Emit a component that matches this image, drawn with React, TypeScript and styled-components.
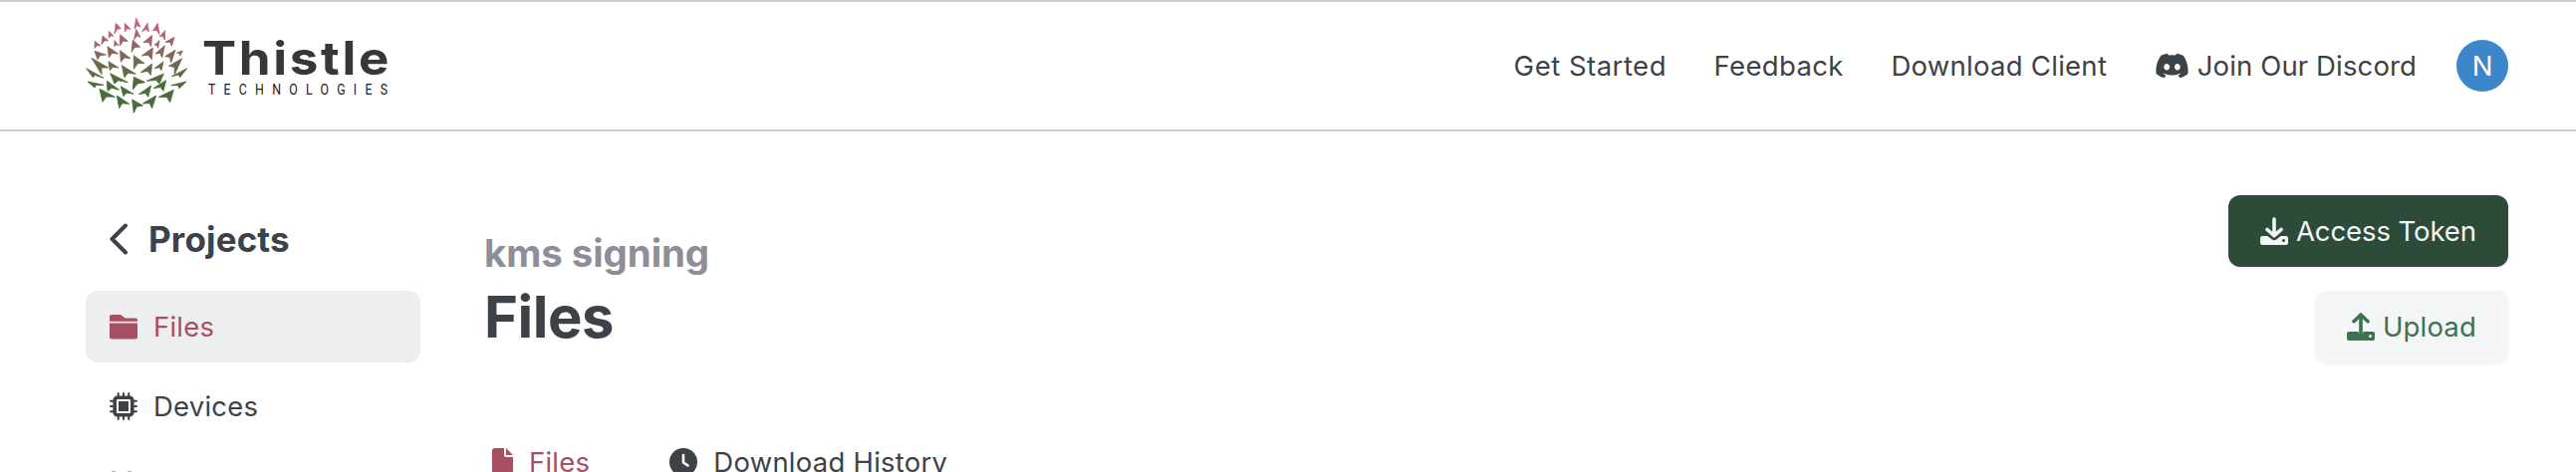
import React from "react";
import styled, { createGlobalStyle } from "styled-components";
import { FaDiscord } from "react-icons/fa6";

const Global = createGlobalStyle`
  *, *::before, *::after { box-sizing: border-box; }
  body { margin: 0; background: #fff; color: #3d4248; font-family: Inter, "Liberation Sans", sans-serif; }
`;

const Page = styled.div`
  height: 474px;
  overflow: hidden;
  background: #fff;
`;

const Header = styled.header`
  display: flex;
  align-items: center;
  justify-content: space-between;
  height: 132px;
  padding: 0 68px 0 84px;
  border-top: 2px solid #cccccc;
  border-bottom: 2px solid #ccd1d5;
`;

const Nav = styled.nav`
  display: flex;
  align-items: center;
`;

const NavLink = styled.a<{ $gap?: number; $spacing?: number }>`
  display: flex;
  align-items: center;
  gap: 8px;
  margin-right: ${(p) => p.$gap ?? 47.6}px;
  font-size: 27.5px;
  line-height: 40px;
  letter-spacing: ${(p) => p.$spacing ?? 0}px;
  white-space: nowrap;
`;

const DiscordIcon = styled(FaDiscord)`
  width: 35px;
  height: 28px;
`;

const Avatar = styled.div`
  display: flex;
  align-items: center;
  justify-content: center;
  width: 52px;
  height: 52px;
  border-radius: 50%;
  background: #3c87cc;
  color: #fff;
  font-size: 27.5px;
`;

const Body = styled.div`
  display: flex;
  padding: 64px 68px 0 86px;
`;

const Sidebar = styled.aside`
  display: flex;
  flex-direction: column;
  gap: 8px;
  width: 336px;
  flex: none;
`;

const BackLink = styled.a`
  display: flex;
  align-items: center;
  gap: 21px;
  height: 88px;
  padding-left: 24px;
  font-size: 35px;
  font-weight: 700;
  letter-spacing: 0.15px;
`;

const SideItem = styled.a<{ $active?: boolean }>`
  display: flex;
  align-items: center;
  gap: 16px;
  height: 72px;
  padding-left: 24px;
  border-radius: 12px;
  background: ${(p) => (p.$active ? "#edeef0" : "transparent")};
  color: ${(p) => (p.$active ? "#a75064" : "#3d4248")};
  font-size: 27.5px;
  letter-spacing: 0.2px;
`;

const Main = styled.main`
  flex: 1;
  margin-left: 64px;
`;

const TitleRow = styled.div`
  display: flex;
  justify-content: space-between;
  height: 232px;
`;

const Titles = styled.div`
  padding-top: 34px;
`;

const ProjectName = styled.h2`
  margin: 0;
  color: #8c8f99;
  font-size: 38.5px;
  font-weight: 700;
  line-height: 48px;
  letter-spacing: -0.1px;
`;

const Title = styled.h1`
  margin: 0;
  font-size: 58px;
  font-weight: 700;
  line-height: 80px;
  letter-spacing: -0.5px;
`;

const Actions = styled.div`
  display: flex;
  flex-direction: column;
  align-items: flex-end;
  gap: 24px;
`;

const Button = styled.button<{ $primary?: boolean }>`
  display: flex;
  align-items: center;
  gap: 8px;
  height: 72px;
  padding: 0 32px;
  border: 0;
  border-radius: 12px;
  background: ${(p) => (p.$primary ? "#2c4c39" : "#f4f5f7")};
  color: ${(p) => (p.$primary ? "#f4f5f7" : "#3c734f")};
  box-shadow: 0 2px 4px rgba(0, 0, 0, 0.05);
  font: 400 27.5px Inter, sans-serif;
  letter-spacing: ${(p) => (p.$primary ? -0.08 : 0.17)}px;
`;

const Tabs = styled.div`
  display: flex;
  gap: 80px;
  padding-left: 8px;
`;

const Tab = styled.a<{ $active?: boolean }>`
  display: flex;
  align-items: center;
  gap: 16px;
  height: 72px;
  color: ${(p) => (p.$active ? "#a75064" : "#3d4248")};
  font-size: 27.5px;
  letter-spacing: 0.24px;
  white-space: nowrap;
`;

/* Thistle petals: tip followed by the two tail points. */
const petals = [
  "158,13 153,45 171,40", "158,46 152,77 171,70", "148,78 144,115 170,100",
  "97,28 93,60 112,44", "124,28 124,54 141,46", "76,52 76,73 90,67",
  "57,66 54,92 74,80", "34,82 33,103 50,96", "110,62 109,96 133,82",
  "93,80 93,98 105,95", "33,112 42,137 67,123", "72,98 76,131 104,120",
  "110,110 112,145 141,134", "192,28 176,53 196,53", "223,28 209,50 228,62",
  "245,50 229,68 244,78", "206,64 180,86 203,98", "228,80 213,94 224,103",
  "273,70 246,85 265,97", "208,102 175,126 205,137", "244,95 216,120 236,132",
  "276,109 245,128 263,147", "298,111 281,117 290,126", "296,134 257,157 274,182",
  "24,133 54,182 74,162", "8,164 28,191 60,193", "12,204 33,222 60,214",
  "75,143 79,170 105,162", "115,155 123,191 157,181", "80,179 93,210 133,206",
  "70,202 72,232 107,229", "112,218 120,248 150,241", "48,226 57,265 94,250",
  "100,246 107,284 137,271", "151,125 151,166 183,149", "151,190 148,228 185,206",
  "146,258 151,298 178,276", "206,150 172,176 202,184", "240,144 213,164 234,170",
  "241,180 190,202 228,210", "311,164 265,188 290,191", "309,204 263,215 288,224",
  "248,200 210,224 240,232", "203,216 166,242 194,250", "271,229 226,250 260,266",
  "218,246 178,270 206,284",
].map((row) => {
  const [tip, a, b] = row.split(" ").map((p) => p.split(",").map(Number));
  const notch = [0, 1].map((i) => ((a[i] + b[i]) / 2) * 0.74 + tip[i] * 0.26);
  return [tip, a, notch, b].map((p) => p.join(",")).join(" ");
});

const Logo = () => (
  <svg width="310" height="110" viewBox="0 0 310 110" aria-label="Thistle Technologies">
    <defs>
      <linearGradient id="bloom" gradientUnits="userSpaceOnUse" x1="0" y1="10" x2="0" y2="300">
        <stop offset="0" stopColor="#d4588c" />
        <stop offset="0.14" stopColor="#bb6280" />
        <stop offset="0.32" stopColor="#8b665f" />
        <stop offset="0.48" stopColor="#71694e" />
        <stop offset="0.68" stopColor="#4c6c3a" />
        <stop offset="1" stopColor="#47693a" />
      </linearGradient>
    </defs>
    <g transform="translate(0 3) scale(0.33333)" fill="url(#bloom)" stroke="url(#bloom)" strokeWidth="2.6">
      {petals.map((d) => (
        <polygon key={d} points={d} />
      ))}
    </g>
    <text transform="translate(119 63.500) scale(1.1 1)" x="0" y="0" fontFamily="Inter" fontWeight="700" fontSize="46.5" fill="#373737" textLength="170.5">Thistle</text>
    <text transform="translate(125 84) scale(0.8 1)" x="0" y="0" fontFamily="Roboto" fontSize="15.5" fill="#222" textLength="225">TECHNOLOGIES</text>
  </svg>
);

const ChevronLeft = () => (
  <svg width="18" height="32" viewBox="0 0 18 32" fill="none" stroke="currentColor" strokeWidth="4" strokeLinecap="round" strokeLinejoin="round">
    <path d="M16 2.5 2.5 16 16 29.5" />
  </svg>
);

const Folder = () => (
  <svg width="28" height="28" viewBox="0 0 28 28" fill="currentColor">
    <path d="M0 8.700V4a2 2 0 0 1 2-2h8.500a3 3 0 0 1 2 .9l1.700 1.700a3 3 0 0 0 2 .8H26a2 2 0 0 1 2 2v1.300z" />
    <path d="M0 10.500h28V24a2.500 2.500 0 0 1-2.500 2.500h-23A2.500 2.500 0 0 1 0 24z" />
  </svg>
);

const Chip = () => (
  <svg width="28" height="28" viewBox="0 0 28 28" fill="none" stroke="currentColor">
    <path strokeWidth="2" strokeLinecap="round" d="M8.700 1v4M14 1v4M19.300 1v4M8.700 23v4M14 23v4M19.300 23v4M1 8.700h4M1 14h4M1 19.300h4M23 8.700h4M23 14h4M23 19.300h4" />
    <rect x="5.200" y="5.200" width="17.600" height="17.600" rx="2.500" strokeWidth="3.600" />
    <rect x="9" y="9" width="10" height="10" fill="currentColor" stroke="none" />
  </svg>
);

const Group = () => (
  <svg width="28" height="30" viewBox="0 -1 28 30" fill="currentColor">
    <rect x="1.500" y="-0.400" width="5.500" height="8" rx="1.500" />
    <rect x="17.500" y="-0.400" width="5.500" height="8" rx="1.500" />
  </svg>
);

const Tray = ({ up }: { up?: boolean }) => (
  <svg width="28" height="28" viewBox="0 0 28 28" fill="currentColor">
    <path
      fillRule="evenodd"
      d={
        up
          ? "M2 19h9a3.200 3.200 0 0 0 6 0h9a2 2 0 0 1 2 2v5a2 2 0 0 1-2 2H2a2 2 0 0 1-2-2v-5a2 2 0 0 1 2-2zM23.500 22a1.500 1.500 0 1 0 0 3a1.500 1.500 0 0 0 0-3z"
          : "M2 19h5.500l4 3.300a4 4 0 0 0 5 0l4-3.300H26a2 2 0 0 1 2 2v5a2 2 0 0 1-2 2H2a2 2 0 0 1-2-2v-5a2 2 0 0 1 2-2zM23.500 22a1.500 1.500 0 1 0 0 3a1.500 1.500 0 0 0 0-3z"
      }
    />
    <path
      fill="none"
      stroke="currentColor"
      strokeWidth="3.600"
      strokeLinecap="round"
      strokeLinejoin="round"
      d={up ? "M14 20V2M7 8.700 14 2l7 6.700" : "M14 2v16M7 12.500l7 6.200L21 12.500"}
    />
  </svg>
);

const FileIcon = () => (
  <svg width="21" height="28" viewBox="0 0 21 28" fill="currentColor">
    <path d="M0 2.500A2.500 2.500 0 0 1 2.500 0H12v7a2 2 0 0 0 2 2h7v16.500a2.500 2.500 0 0 1-2.500 2.500h-16A2.500 2.500 0 0 1 0 25.500z" />
    <path d="M14 0l7 7h-7z" />
  </svg>
);

const Clock = () => (
  <svg width="28" height="28" viewBox="0 0 28 28">
    <circle cx="14" cy="14" r="14" fill="currentColor" />
    <path d="M14 7v7.500l4.500 3" fill="none" stroke="#fff" strokeWidth="2.600" strokeLinecap="round" strokeLinejoin="round" />
  </svg>
);

export default function App() {
  return (
    <Page>
      <Global />
      <Header>
        <Logo />
        <Nav>
          <NavLink $spacing={0.5}>Get Started</NavLink>
          <NavLink $spacing={0.35}>Feedback</NavLink>
          <NavLink $spacing={0.27}>Download Client</NavLink>
          <NavLink $gap={40} $spacing={0.13}>
            <DiscordIcon />
            Join Our Discord
          </NavLink>
          <Avatar>N</Avatar>
        </Nav>
      </Header>
      <Body>
        <Sidebar>
          <BackLink>
            <ChevronLeft />
            Projects
          </BackLink>
          <SideItem $active>
            <Folder />
            Files
          </SideItem>
          <SideItem>
            <Chip />
            Devices
          </SideItem>
          <SideItem>
            <Group />
          </SideItem>
        </Sidebar>
        <Main>
          <TitleRow>
            <Titles>
              <ProjectName>kms signing</ProjectName>
              <Title>Files</Title>
            </Titles>
            <Actions>
              <Button $primary>
                <Tray />
                Access Token
              </Button>
              <Button>
                <Tray up />
                Upload
              </Button>
            </Actions>
          </TitleRow>
          <Tabs>
            <Tab $active>
              <FileIcon />
              Files
            </Tab>
            <Tab>
              <Clock />
              Download History
            </Tab>
          </Tabs>
        </Main>
      </Body>
    </Page>
  );
}
